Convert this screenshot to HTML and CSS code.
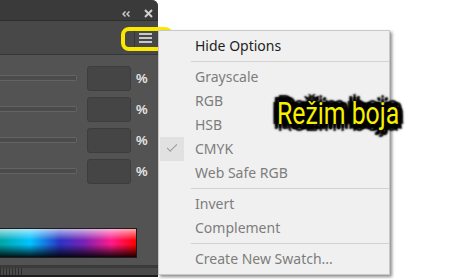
FILE: index.html
```html
<!DOCTYPE html>
<html lang="en">
<head>
    <meta charset="UTF-8">
    <title>Color panel menu</title>
    <link rel="stylesheet" href="styles.css">
</head>
<body>
    <div class="stage">
        <div class="panel">
            <div class="titlebar">
                <svg class="collapse" width="8" height="6" viewBox="0 0 8 6">
                    <path d="M3.5 0.5 L1 3 L3.5 5.5 M7.5 0.5 L5 3 L7.5 5.5" fill="none" stroke="#c8c8c8" stroke-width="1.5"/>
                </svg>
                <svg class="close" width="9" height="9" viewBox="0 0 9 9">
                    <path d="M1 1 L8 8 M8 1 L1 8" fill="none" stroke="#d0d0d0" stroke-width="2"/>
                </svg>
            </div>
            <div class="tabrow">
                <div class="menu-btn">
                    <span></span><span></span><span></span>
                </div>
            </div>
            <div class="panel-body">
                <div class="slider-row">
                    <div class="track"></div>
                    <div class="field"></div>
                    <span class="unit">%</span>
                </div>
                <div class="slider-row">
                    <div class="track"></div>
                    <div class="field"></div>
                    <span class="unit">%</span>
                </div>
                <div class="slider-row">
                    <div class="track"></div>
                    <div class="field"></div>
                    <span class="unit">%</span>
                </div>
                <div class="slider-row">
                    <div class="track"></div>
                    <div class="field"></div>
                    <span class="unit">%</span>
                </div>
                <div class="spectrum"></div>
            </div>
            <div class="strip"></div>
            <div class="ruler"></div>
            <div class="bottom-line"></div>
        </div>

        <div class="highlight"></div>

        <ul class="popup">
            <li class="item strong">Hide Options</li>
            <li class="sep"></li>
            <li class="item">Grayscale</li>
            <li class="item">RGB</li>
            <li class="item">HSB</li>
            <li class="item checked">CMYK</li>
            <li class="item">Web Safe RGB</li>
            <li class="sep"></li>
            <li class="item">Invert</li>
            <li class="item">Complement</li>
            <li class="sep"></li>
            <li class="item">Create New Swatch...</li>
        </ul>

        <div class="callout">Režim boja</div>
    </div>
</body>
</html>
```

FILE: styles.css
```css
body {
    margin: 0;
    background-color: #ffffff;
    font-family: "Noto Sans", "Open Sans", sans-serif;
}
.stage {
    position: relative;
    width: 460px;
    height: 279px;
    overflow: hidden;
}
.panel {
    width: 158px;
    height: 277px;
    display: flex;
    flex-direction: column;
    background-color: #535353;
    border-top-right-radius: 6px;
    overflow: hidden;
}
.titlebar {
    height: 21px;
    background-color: #3a3a3a;
    border-bottom: 1px solid #2e2e2e;
    display: flex;
    align-items: center;
    justify-content: flex-end;
    gap: 14px;
    padding-right: 5px;
    padding-top: 6px;
    box-sizing: border-box;
}
.collapse {
    margin-top: 1px;
}
.tabrow {
    height: 33px;
    background-color: #484848;
    border-bottom: 1px solid #363636;
    display: flex;
    align-items: center;
    justify-content: flex-end;
    padding-right: 3px;
}
.menu-btn {
    width: 20px;
    height: 20px;
    border-left: 1px solid #363636;
    display: flex;
    flex-direction: column;
    justify-content: center;
    align-items: center;
    gap: 2px;
}
.menu-btn span {
    display: block;
    width: 13px;
    height: 2px;
    background-color: #c8c8c8;
}
.panel-body {
    flex: 1;
    padding-top: 11px;
    display: flex;
    flex-direction: column;
    gap: 7px;
}
.slider-row {
    display: flex;
    align-items: center;
    height: 24px;
}
.track {
    width: 76px;
    height: 4px;
    border: 1px solid #646464;
    border-left: none;
    background-color: #4b4b4b;
    border-radius: 0 2px 2px 0;
}
.field {
    width: 42px;
    height: 23px;
    margin-left: 10px;
    background-color: #454545;
    border: 1px solid #3d3d3d;
    border-radius: 3px;
}
.unit {
    margin-left: 5px;
    color: #e6e6e6;
    font-family: "Liberation Sans", Arial, sans-serif;
    font-weight: bold;
    font-size: 13px;
}
.spectrum {
    margin-top: 38px;
    width: 136px;
    height: 28px;
    border: 1px solid #1c1c1c;
    border-left: none;
    background:
        linear-gradient(to bottom, rgba(255,255,255,0.65), rgba(255,255,255,0) 40%, rgba(0,0,0,0) 55%, rgba(0,0,0,0.9)),
        linear-gradient(to right, #00a7a7, #00c4ff 22%, #2a34c4 44%, #7a22b4 62%, #ff1a8a 82%, #ff0000);
}
.strip {
    height: 3px;
    background-color: #3b3b3b;
}
.ruler {
    height: 7px;
    background-color: #4a4a4a;
    background-image: repeating-linear-gradient(to right, #2e2e2e 0 1px, transparent 1px 3px);
    background-size: 22px 100%;
    background-repeat: no-repeat;
}
.bottom-line {
    height: 2px;
    background-color: #1e1e1e;
}
.highlight {
    position: absolute;
    left: 121px;
    top: 27px;
    width: 44px;
    height: 16px;
    border: 4px solid #fbe900;
    border-radius: 8px;
}
.popup {
    position: absolute;
    left: 158px;
    top: 30px;
    width: 230px;
    margin: 0;
    padding: 3px 0;
    list-style: none;
    background-color: #f0f0f0;
    border: 1px solid #c9c9c9;
    box-shadow: 2px 2px 3px rgba(0,0,0,0.45);
    font-size: 14px;
}
.item {
    position: relative;
    height: 24px;
    line-height: 24px;
    padding-left: 36px;
    color: #7d7d7d;
}
.item.strong {
    color: #1e1e1e;
}
.item.checked::before {
    content: "";
    position: absolute;
    left: 1px;
    top: 0;
    width: 24px;
    height: 24px;
    background-color: #e1e1e1;
}
.item.checked::after {
    content: "";
    position: absolute;
    left: 8px;
    top: 7px;
    width: 9px;
    height: 4px;
    border-left: 1.5px solid #9a9a9a;
    border-bottom: 1.5px solid #9a9a9a;
    transform: rotate(-45deg);
}
.sep {
    height: 1px;
    margin: 3px 0 3px 32px;
    background-color: #d2d2d2;
}
.callout {
    position: absolute;
    left: 277px;
    top: 95px;
    font-family: Roboto, "Liberation Sans", sans-serif;
    font-size: 31px;
    color: #f7f000;
    transform: scaleX(0.8);
    transform-origin: left center;
    text-shadow:
        0 0 3px #000, 0 0 3px #000,
        4px 0 2px #000, -4px 0 2px #000, 0 4px 2px #000, 0 -4px 2px #000,
        4px 4px 2px #000, -4px -4px 2px #000, 4px -4px 2px #000, -4px 4px 2px #000,
        7px 0 2px #000, -7px 0 2px #000, 0 7px 2px #000, 0 -7px 2px #000,
        5px 5px 2px #000, -5px -5px 2px #000, 5px -5px 2px #000, -5px 5px 2px #000;
}
```
